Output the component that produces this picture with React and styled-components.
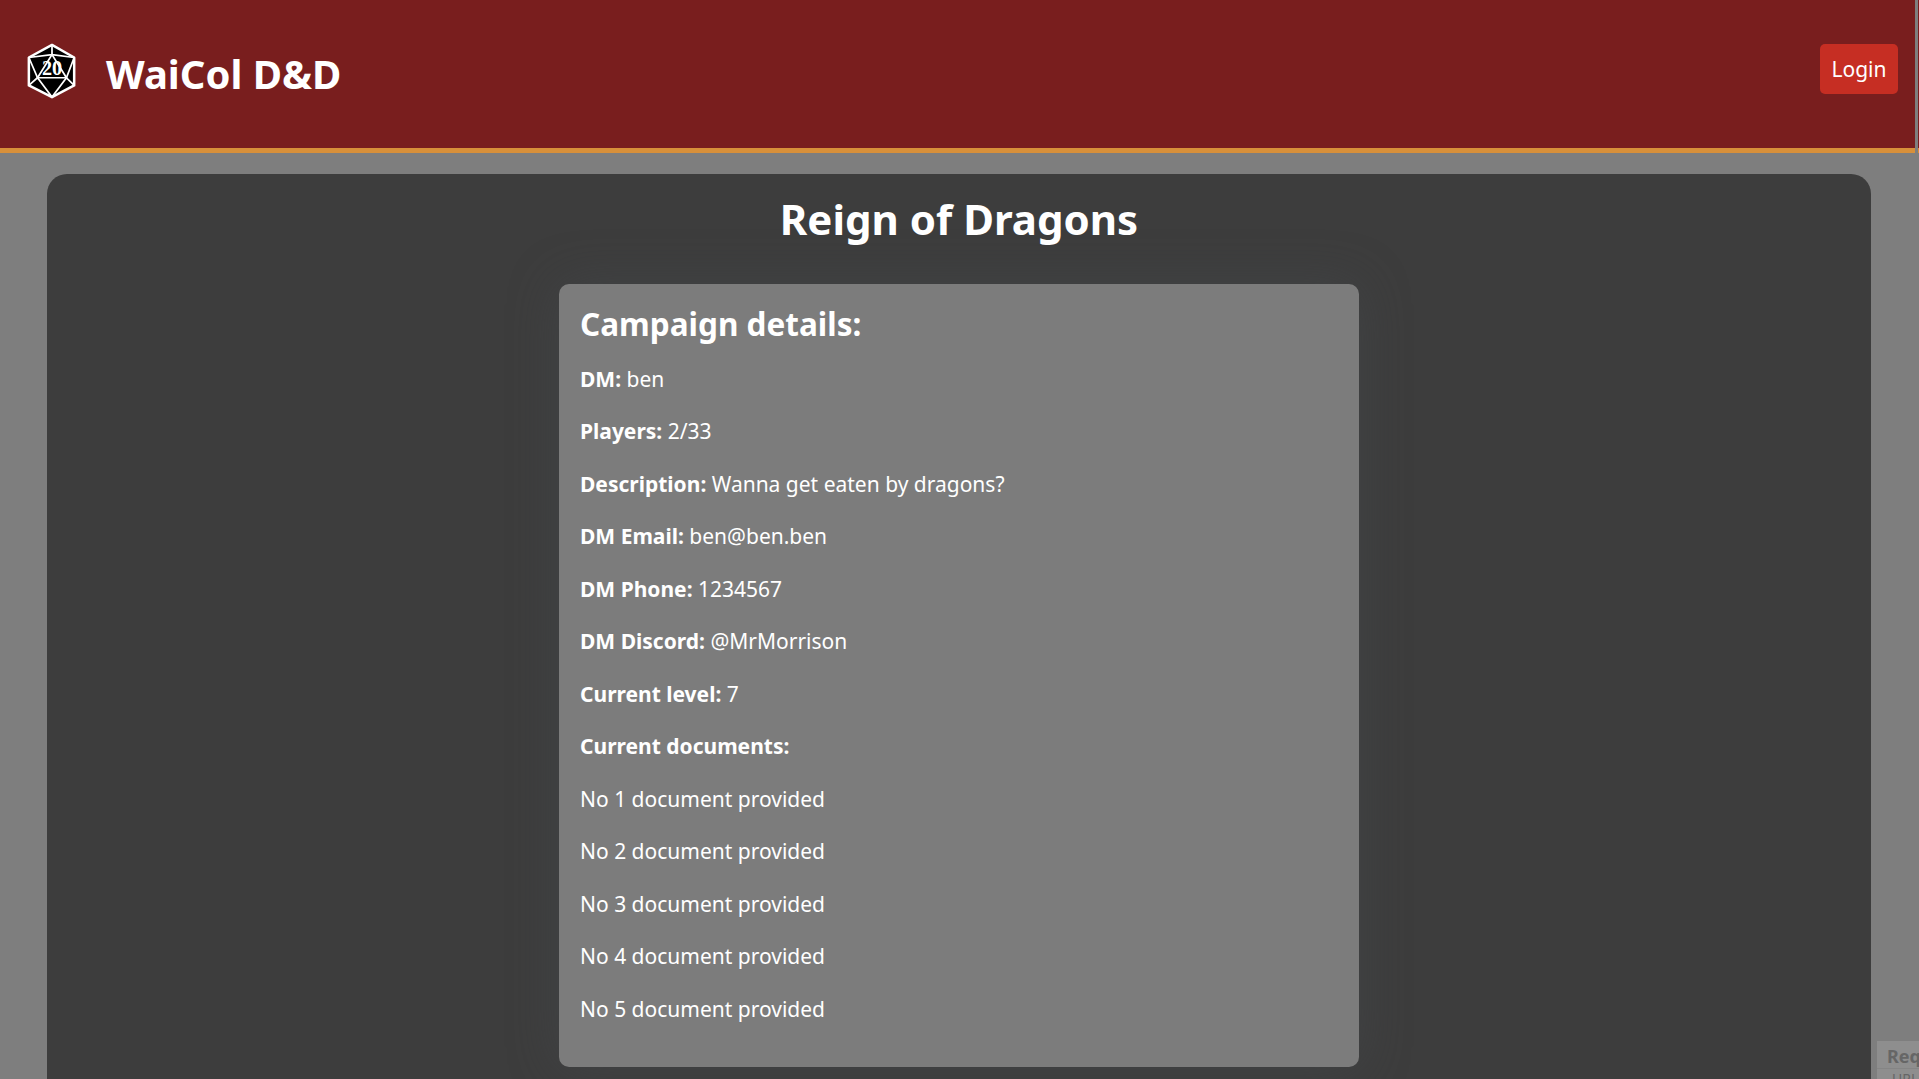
import React from 'react';
import styled, { createGlobalStyle } from 'styled-components';

const GlobalStyle = createGlobalStyle`
    html, body {
        margin: 0;
        height: 100%;
        overflow: hidden;
    }

    body {
        background: #7e7e7e;
        color: #fff;
        font-family: "Noto Sans", sans-serif;
        font-size: 20px;
    }
`;

const Page = styled.div`
    height: 1079px;
    overflow: hidden;
    position: relative;
`;

const Header = styled.header`
    box-sizing: border-box;
    height: 153px;
    padding: 0 21px 0 25px;
    display: flex;
    justify-content: space-between;
    background: #791e1e;
    border-bottom: 5px solid #d8903a;
`;

const Brand = styled.div`
    display: flex;
    align-items: center;
    gap: 27px;
    padding-bottom: 1px;
`;

const LogoSvg = styled.svg`
    margin-bottom: 5px;
`;

const Title = styled.h1`
    margin: 0;
    font-size: 40px;
    font-weight: 700;
`;

const LoginButton = styled.button`
    align-self: flex-start;
    margin-top: 44px;
    width: 78px;
    height: 50px;
    border: 0;
    border-radius: 5px;
    background: #c62e23;
    color: #fff;
    font: 400 21px "Noto Sans", sans-serif;
`;

const ScrollThumb = styled.div`
    position: absolute;
    top: 0;
    right: 1px;
    width: 3px;
    height: 153px;
    background: #7e7e7e;
`;

const Main = styled.main`
    margin: 21px 47px 0 47px;
    padding: 15px 0 0;
    width: 1824px;
    min-height: 1000px;
    background: #3d3d3d;
    border-radius: 20px;
`;

const CampaignName = styled.h2`
    margin: 0 0 35px;
    text-align: center;
    font-size: 42px;
    font-weight: 700;
    line-height: 60px;
`;

const Details = styled.section`
    box-sizing: border-box;
    width: 800px;
    height: 783px;
    margin: 0 auto;
    padding: 18px 21px;
    background: #7c7c7c;
    border-radius: 10px;
    box-shadow: 0 0 50px rgba(70, 75, 80, 0.45);
`;

const DetailsHeading = styled.h3`
    margin: 0 0 19.6px;
    font-size: 31.5px;
    font-weight: 700;
    line-height: 44px;
`;

const Line = styled.p`
    margin: 0 0 25.5px;
    font-size: 21px;
    line-height: 27px;
`;

const RequestWidget = styled.div`
    position: absolute;
    left: 1877px;
    top: 1041px;
    width: 100px;
    height: 60px;
    background: #8e8e8e;
    color: #666;
`;

const WidgetTitle = styled.div`
    box-sizing: border-box;
    height: 28px;
    padding: 3px 10px 0;
    font-size: 18px;
    font-weight: 700;
    line-height: 24px;
    border-bottom: 1px solid #858585;
`;

const WidgetRow = styled.div`
    padding: 1px 15px 0;
    font-size: 14px;
    line-height: 18px;
`;

const D20Logo = () => (
    <LogoSvg width="54" height="58" viewBox="0 0 56 60">
        <polygon points="28,3 51,16 51,45 28,57 4,45 4,16" fill="#000" stroke="#fff" strokeWidth="2.6" strokeLinejoin="round" />
        <g fill="none" stroke="#fff" strokeWidth="1.8">
            <polygon points="28,13 43,37 13,37" />
            <path d="M28 3 28 13M4 16 28 13 51 16M4 16 13 37 4 45M51 16 43 37 51 45M13 37 28 57 43 37" />
        </g>
        <text x="28" y="34" textAnchor="middle" fontFamily="Liberation Serif, serif" fontSize="21" fontWeight="700" fill="#fff">20</text>
    </LogoSvg>
);

const rows = [
    ['DM:', 'ben'],
    ['Players:', '2/33'],
    ['Description:', 'Wanna get eaten by dragons?'],
    ['DM Email:', 'ben@ben.ben'],
    ['DM Phone:', '1234567'],
    ['DM Discord:', '@MrMorrison'],
    ['Current level:', '7'],
    ['Current documents:', ''],
];

const App = () => (
    <Page>
        <GlobalStyle />
        <Header>
            <Brand>
                <D20Logo />
                <Title>WaiCol D&amp;D</Title>
            </Brand>
            <LoginButton>Login</LoginButton>
        </Header>
        <ScrollThumb />
        <Main>
            <CampaignName>Reign of Dragons</CampaignName>
            <Details>
                <DetailsHeading>Campaign details:</DetailsHeading>
                {rows.map(([label, value]) => (
                    <Line key={label}>
                        <strong>{label}</strong> {value}
                    </Line>
                ))}
                {[1, 2, 3, 4, 5].map((n) => (
                    <Line key={n}>No {n} document provided</Line>
                ))}
            </Details>
        </Main>
        <RequestWidget>
            <WidgetTitle>Request</WidgetTitle>
            <WidgetRow>URL</WidgetRow>
        </RequestWidget>
    </Page>
);

export default App;
